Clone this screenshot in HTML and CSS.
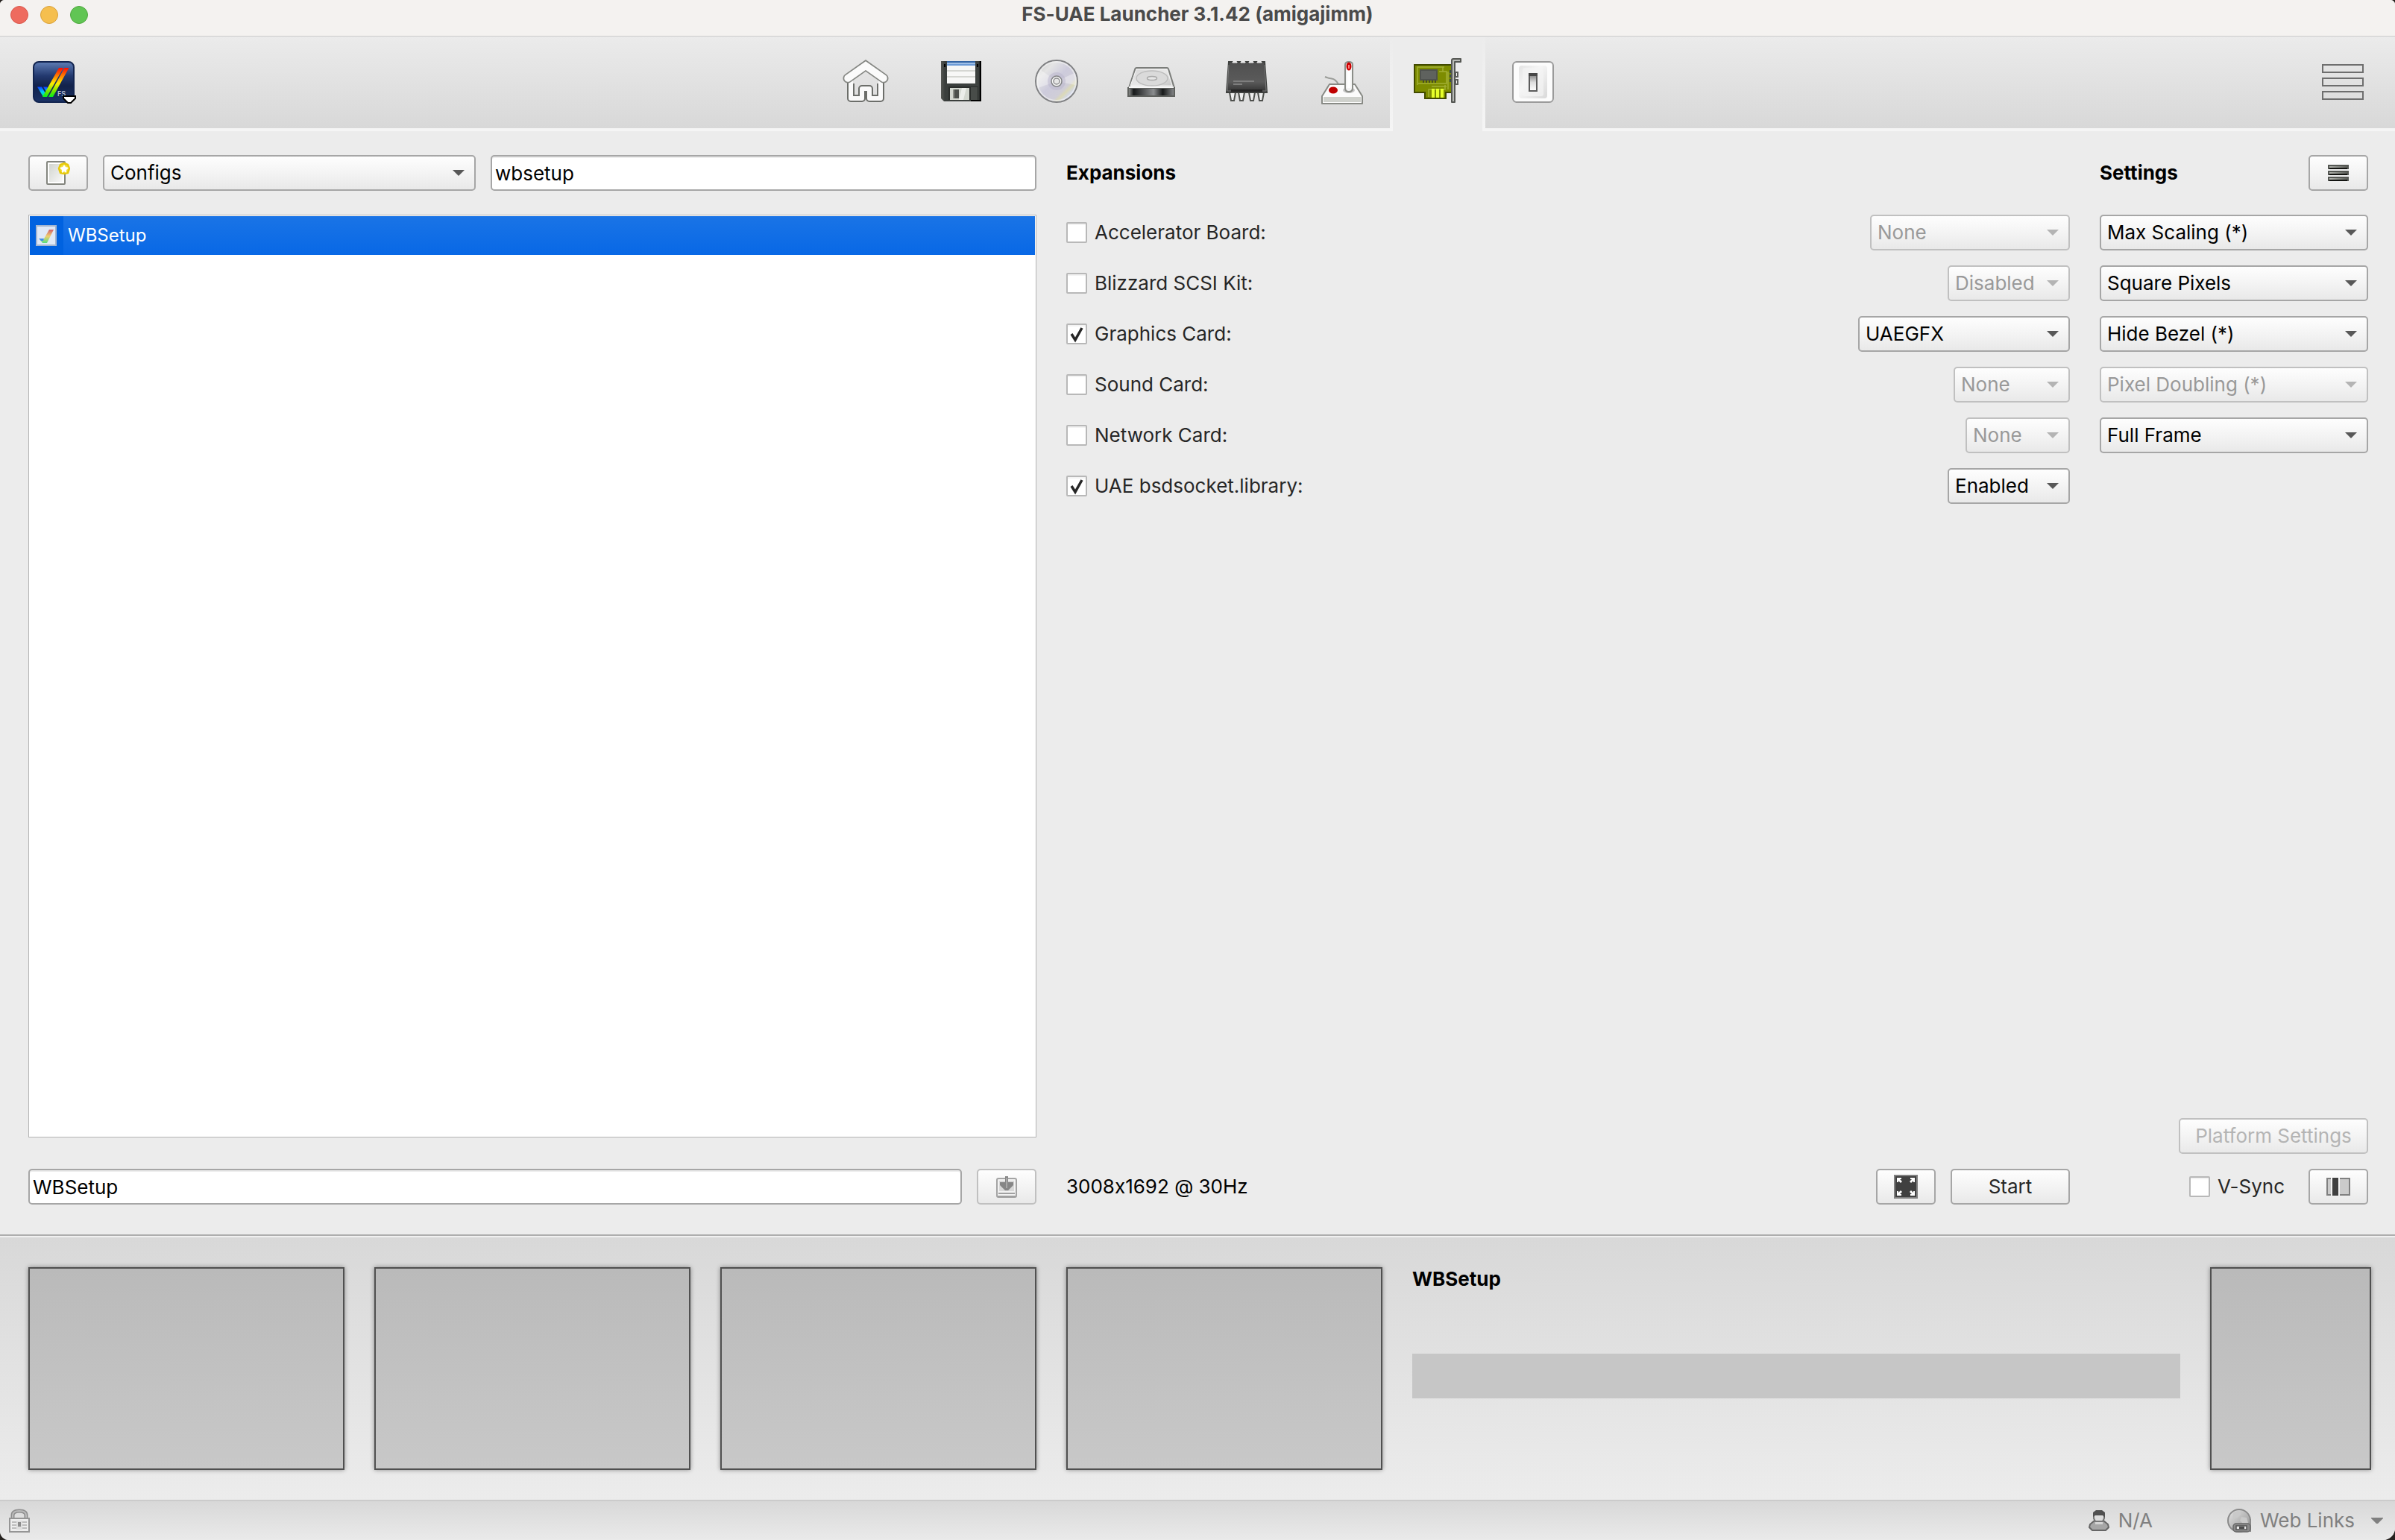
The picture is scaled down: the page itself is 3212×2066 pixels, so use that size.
FILE: index.html
```html
<!DOCTYPE html>
<html lang="en">
<head>
<meta charset="utf-8">
<meta name="viewport" content="width=device-width, initial-scale=1">
<title>FS-UAE Launcher 3.1.42 (amigajimm)</title>
<link rel="stylesheet" href="styles.css">
</head>
<body>
<div class="window">
  <header class="titlebar">
    <div class="lights">
      <button class="light light-close" type="button" aria-label="Close"></button>
      <button class="light light-minimize" type="button" aria-label="Minimize"></button>
      <button class="light light-zoom" type="button" aria-label="Zoom"></button>
    </div>
    <h1 class="window-title">FS-UAE Launcher 3.1.42 (amigajimm)</h1>
  </header>

  <div class="toolbar">
    <button class="tool tool-logo" type="button" aria-label="Main menu">
      <svg width="60" height="64" viewBox="0 0 60 64">
        <defs>
          <linearGradient id="logo-bg" x1="0" y1="0" x2="0" y2="1"><stop offset="0" stop-color="#5f7db5"/><stop offset=".35" stop-color="#22386e"/><stop offset=".6" stop-color="#12224a"/><stop offset="1" stop-color="#1a3266"/></linearGradient>
          <linearGradient id="rainbow" gradientUnits="userSpaceOnUse" x1="0" y1="12" x2="0" y2="52"><stop offset="0" stop-color="#f00"/><stop offset=".25" stop-color="#ff6a00"/><stop offset=".55" stop-color="#ffee00"/><stop offset=".85" stop-color="#5be600"/><stop offset="1" stop-color="#00f020"/></linearGradient>
          <linearGradient id="tick-blue" gradientUnits="userSpaceOnUse" x1="0" y1="38" x2="0" y2="52"><stop offset="0" stop-color="#1030ff"/><stop offset=".5" stop-color="#00c8ff"/><stop offset="1" stop-color="#00ff60"/></linearGradient>
        </defs>
        <rect x="1" y="5" width="54" height="54" rx="7" fill="url(#logo-bg)" stroke="#132550" stroke-width="2"/>
        <path d="M6 38.500h6l5 9-3 4.500z" fill="url(#tick-blue)"/>
        <path d="M14 38.500h5l3 4-3 4z" fill="url(#tick-blue)"/>
        <path d="M35 13h6L19 52h-6zM42.500 13h6L27 52h-6z" fill="url(#rainbow)"/>
        <text x="33" y="51" class="logo-text">FS</text>
        <path d="M41 51h16v3l-6 6h-4l-6-6z" fill="#fff" stroke="#000" stroke-width="2"/>
      </svg>
    </button>

    <nav class="tabs" aria-label="Sections">
      <button class="tab" type="button" aria-label="Home">
        <svg width="64" height="64" viewBox="0 0 64 64" fill="none">
          <path d="M13 30V54H28V41H38V54H53V30" stroke="#6c6e6a" stroke-width="10" stroke-linejoin="round"/>
          <path d="M13 29V54H28V41H38V54H53V29" stroke="#fafafa" stroke-width="6" stroke-linejoin="round"/>
          <path d="M16 26h34v8l-4 0-13-9-13 9h-4z" fill="#e2e2e2"/>
          <path d="M9 27L33 10L57 27" stroke="#858783" stroke-width="13" stroke-linecap="round"/>
          <path d="M9 27L33 10L57 27" stroke="#fbfbfb" stroke-width="9.500" stroke-linecap="round"/>
        </svg>
      </button>
      <button class="tab" type="button" aria-label="Floppy drives">
        <svg width="64" height="64" viewBox="0 0 64 64">
          <defs><linearGradient id="floppy" x1="0" y1="0" x2="1" y2="0"><stop offset="0" stop-color="#555753"/><stop offset=".1" stop-color="#3a3e3c"/><stop offset=".93" stop-color="#3d413f"/><stop offset="1" stop-color="#0c0c0c"/></linearGradient></defs>
          <path d="M6 4h54v54H10l-4-4z" fill="url(#floppy)"/>
          <path d="M46 56h14v2H46zM58 4h2v54h-2z" fill="#000"/>
          <path d="M10 8h2v4h-2zM54 8h2v4h-2z" fill="#000"/>
          <path d="M14 4h38v30H14z" fill="#f7f7f6"/>
          <path d="M14 4h38v2H14z" fill="#3465a4"/><path d="M14 6h38v2H14z" fill="#9fbfe6"/><path d="M14 8h38v2H14z" fill="#6d9bd6"/>
          <path d="M14 16h38v2H14zM14 24h38v2H14z" fill="#d5d6d2"/>
          <path d="M16 38h40v18H16z" fill="#2a2d2b"/><path d="M46 39h9v17h-9z" fill="#484c49"/>
          <path d="M18 40h26v16H18z" fill="#d3d7cf"/><path d="M34 40h6l-4 16h-6z" fill="#eceeea"/>
          <path d="M22 42h8v12h-8z" fill="#8a8d86"/><path d="M24 42h6v12h-6z" fill="#4c504b"/>
        </svg>
      </button>
      <button class="tab" type="button" aria-label="CD-ROM drives">
        <svg width="64" height="64" viewBox="0 0 64 64">
          <defs><linearGradient id="disc" x1="0" y1="0" x2="1" y2="1"><stop offset="0" stop-color="#c4c4c4"/><stop offset=".25" stop-color="#e4e4e4"/><stop offset=".48" stop-color="#cdcbdc"/><stop offset=".68" stop-color="#d0ced8"/><stop offset=".74" stop-color="#dbd9b8"/><stop offset=".82" stop-color="#d2d8ee"/><stop offset="1" stop-color="#c0c0c0"/></linearGradient></defs>
          <circle cx="33" cy="31" r="28" fill="url(#disc)" stroke="#808183" stroke-width="2"/>
          <circle cx="33" cy="31" r="26" fill="none" stroke="#f4f4f4" stroke-opacity=".6" stroke-width="2"/>
          <path d="M33 31L12 16A26 26 0 0 0 8 40z" fill="#fff" fill-opacity=".35"/>
          <path d="M33 31L57 20A26 26 0 0 1 58 36z" fill="#fff" fill-opacity=".35"/>
          <circle cx="33" cy="31" r="12" fill="#b9b6cc" fill-opacity=".5"/>
          <circle cx="33" cy="31" r="5.500" fill="#e6e6e6" stroke="#f7f7f7" stroke-width="3"/>
          <circle cx="33" cy="31" r="7" fill="none" stroke="#828385" stroke-width="1.500"/>
          <circle cx="33" cy="31" r="4" fill="none" stroke="#8c8c8e" stroke-width="1.500"/>
        </svg>
      </button>
      <button class="tab" type="button" aria-label="Hard drives">
        <svg width="64" height="64" viewBox="0 0 64 64">
          <defs>
            <linearGradient id="hdd-top" x1="0" y1="0" x2="1" y2="1"><stop offset="0" stop-color="#d4d4d4"/><stop offset=".5" stop-color="#e8e8e8"/><stop offset="1" stop-color="#c0c0c0"/></linearGradient>
            <linearGradient id="hdd-front" x1="0" y1="0" x2="1" y2="0"><stop offset="0" stop-color="#9a9c99"/><stop offset=".12" stop-color="#17191a"/><stop offset=".55" stop-color="#8b8d8f"/><stop offset=".75" stop-color="#17191a"/><stop offset="1" stop-color="#8a8c8e"/></linearGradient>
          </defs>
          <path d="M12 13h41q1.500 0 2 1.500L63 40H2L10.500 14q.500-1 1.500-1z" fill="url(#hdd-top)" stroke="#7b7d7a" stroke-width="2"/>
          <path d="M12 15h41l7 22H4z" fill="none" stroke="#f4f4f4" stroke-width="1"/>
          <ellipse cx="33" cy="27" rx="21" ry="10" fill="#dadada" stroke="#bdbdbd" stroke-width="1.500"/>
          <ellipse cx="33" cy="27" rx="6.500" ry="2.500" fill="#e6e6e6" stroke="#a8a8a8" stroke-width="1.500"/>
          <path d="M1 40h62v11H1z" fill="url(#hdd-front)" stroke="#5f615e" stroke-width="2"/>
          <path d="M2 38h60v2H2z" fill="#f6f6f6"/>
        </svg>
      </button>
      <button class="tab" type="button" aria-label="Hardware">
        <svg width="64" height="64" viewBox="0 0 64 64">
          <defs><linearGradient id="chip" x1="0" y1="0" x2="0" y2="1"><stop offset="0" stop-color="#4f4f4f"/><stop offset=".65" stop-color="#5b5b5b"/><stop offset="1" stop-color="#303030"/></linearGradient></defs>
          <path d="M9 46h8l-2 11h-4zM21 46h8l-2 11h-4zM35 46h8l-2 11h-4zM47 46h8l-2 11h-4z" fill="#eee" stroke="#4e504d" stroke-width="2"/>
          <path d="M8 5h48l3 41H5z" fill="url(#chip)" stroke="#3f413f" stroke-width="2"/>
          <path d="M8 9L6 44h52L56 9" fill="none" stroke="#7a7a7a" stroke-width="1"/>
          <path d="M11 42h42v3H11z" fill="#252525"/>
          <path d="M13 5q3-2 6 0v1h-6zM24 5q3-2 6 0v1h-6zM35 5q3-2 6 0v1h-6zM46 5q3-2 6 0v1h-6z" fill="#eee" stroke="#eee" stroke-width="1"/>
          <path d="M14 30h28v2H14zM14 34h12v2H14z" fill="#7e7e7e"/>
        </svg>
      </button>
      <button class="tab" type="button" aria-label="Input devices">
        <svg width="64" height="64" viewBox="0 0 64 64">
          <path d="M9 25Q13 27 18 27.500T27 35" fill="none" stroke="#9a9c98" stroke-width="2"/>
          <path d="M15 35h34l10 16v10H5V51z" fill="#fbfbfb" stroke="#888a85" stroke-width="2" stroke-linejoin="round"/>
          <path d="M7 52h50v7H7z" fill="#cfd1cc"/>
          <ellipse cx="41" cy="43" rx="8" ry="4" fill="#c6c6c6"/>
          <path d="M36 9q0-4 5-4t5 4v31q0 5-5 5t-5-5z" fill="#f5f5f5" stroke="#8b8d88" stroke-width="2"/>
          <path d="M39 14h4v26h-4z" fill="#fff"/>
          <ellipse cx="41" cy="11" rx="3.500" ry="5.500" fill="#c00"/><path d="M40 9h2v5h-2z" fill="#ff7a7a"/>
          <ellipse cx="20" cy="43" rx="6" ry="4.500" fill="#c00000"/>
        </svg>
      </button>
      <button class="tab tab-active" type="button" aria-label="Expansions" aria-current="page">
        <svg width="64" height="64" viewBox="0 0 64 64">
          <path d="M1 9h50v37h-8v8H15v-8H1z" fill="#7d8c00" stroke="#414a00" stroke-width="2"/>
          <path d="M5 36V12h36M39 12v6M34 18h10v16H6M46 18v24M20 52V42h22v-6M24 38h20" fill="none" stroke="#a3b035" stroke-width="1.500"/>
          <path d="M8 15h24v15H8z" fill="#4f524e"/><path d="M10 17h20v11H10z" fill="#5f625e"/>
          <path d="M12 30h2v3h-2zM16 30h2v3h-2zM20 30h2v3h-2zM24 30h2v3h-2zM28 30h2v3h-2z" fill="#474d20"/>
          <path d="M24 41h4v12h-4zM30 41h4v12h-4zM36 41h4v12h-4z" fill="#e6ff2a"/>
          <path d="M48 16h2v4h-2zM48 22h2v4h-2zM48 28h2v4h-2z" fill="#3c5040"/>
          <path d="M56 19h3v6h-3zM56 29h3v6h-3z" fill="#fff" stroke="#5a5c58" stroke-width="2"/>
          <path d="M51 59V3q0-2 2-2h10v4h-8v54z" fill="#b9bbb7" stroke="#555753" stroke-width="2" stroke-linejoin="round"/>
        </svg>
      </button>
      <button class="tab" type="button" aria-label="Additional configuration">
        <svg width="64" height="64" viewBox="0 0 64 64">
          <defs>
            <linearGradient id="plate" x1="0" y1="0" x2="1" y2="1"><stop offset="0" stop-color="#e4e4e4"/><stop offset=".4" stop-color="#f6f6f6"/><stop offset="1" stop-color="#d9d9d9"/></linearGradient>
            <linearGradient id="rocker" x1="0" y1="0" x2="0" y2="1"><stop offset="0" stop-color="#777"/><stop offset=".5" stop-color="#ddd"/><stop offset="1" stop-color="#fff"/></linearGradient>
          </defs>
          <rect x="5" y="5" width="54" height="54" rx="5" fill="#fcfcfc" stroke="#9a9a9a" stroke-width="2"/>
          <rect x="13" y="10" width="38" height="44" rx="4" fill="url(#plate)"/>
          <rect x="18" y="13" width="28" height="38" rx="3" fill="#f4f4f4" fill-opacity=".7"/>
          <rect x="27" y="21" width="10" height="23" fill="url(#rocker)" stroke="#5c5c5c" stroke-width="2"/>
          <path d="M26 20h12v4H26z" fill="#474747"/>
        </svg>
      </button>
    </nav>

    <button class="tool tool-menu" type="button" aria-label="Menu">
      <svg width="58" height="64" viewBox="0 0 58 64" fill="none" stroke="#6e6e6e" stroke-width="2"><path d="M1 9h54v10H1zM1 27h54v10H1zM1 45h54v10H1z"/></svg>
    </button>
  </div>

  <main class="main">
    <section class="column column-configs" aria-label="Configurations">
      <div class="row">
        <button class="button button-icon" type="button" aria-label="New config">
          <svg width="32" height="32" viewBox="0 0 32 32">
            <defs><linearGradient id="page" x1="0" y1="0" x2="1" y2="1"><stop offset="0" stop-color="#d2d5cf"/><stop offset="1" stop-color="#f8f8f8"/></linearGradient></defs>
            <rect x="1" y="1" width="24" height="30" rx="1" fill="#fff" stroke="#84867f" stroke-width="2"/>
            <path d="M4 4h18v24H4z" fill="url(#page)"/>
            <path d="M24 3l5 2 2 5-2 6-5 1-5-1-2-6 2-5z" fill="#f3df3c" stroke="#e6c80c" stroke-width="2.500"/>
            <path d="M24 5l2 3 4 1-3 3v4l-3-2-3 2v-4l-3-3 4-1z" fill="#fff"/>
          </svg>
        </button>
        <select class="select select-configs" aria-label="List type"><option>Configs</option></select>
        <input class="field" type="text" value="wbsetup" aria-label="Search">
      </div>
      <ul class="list">
        <li class="list-item">
          <span class="list-icon">
            <svg width="28" height="28" viewBox="0 0 28 28">
              <defs><linearGradient id="soft-rainbow" x1="0" y1="0" x2="0" y2="1"><stop offset="0" stop-color="#d0606a"/><stop offset=".5" stop-color="#efd070"/><stop offset="1" stop-color="#56dd80"/></linearGradient></defs>
              <rect x="1" y="1" width="26" height="26" fill="#e0e9f6" stroke="#a4b6d0" stroke-width="2"/>
              <path d="M18 6h6L15 24H9l-3-4h4z" fill="url(#soft-rainbow)"/>
              <path d="M4 18h7l-1 3H7z" fill="#3f90e8"/>
            </svg>
          </span>
          <span class="list-label">WBSetup</span>
        </li>
      </ul>
      <div class="row">
        <input class="field" type="text" value="WBSetup" aria-label="Config name">
        <button class="button button-icon" type="button" aria-label="Save config" disabled>
          <svg width="32" height="32" viewBox="0 0 32 32">
            <rect x="3" y="5" width="26" height="25" rx="2" fill="#f2f2f2" stroke="#a4a4a4" stroke-width="2"/>
            <path d="M6 8h20v14H6z" fill="#d8d8d8"/><path d="M5 24h22v2H5zM4 28h24v2H4z" fill="#a0a0a0"/>
            <path d="M14 2h4v8h7v4l-7 7h-4l-7-7v-4h7z" fill="#868686"/>
            <path d="M15 4h2v14h-2z" fill="#a8a8a8"/>
          </svg>
        </button>
      </div>
    </section>

    <section class="column" aria-label="Expansions">
      <h2 class="heading">Expansions</h2>
      <div class="rows">
        <div class="row option">
          <label class="check"><input type="checkbox" class="box">Accelerator Board:</label>
          <select class="select w-268" aria-label="Accelerator board model" disabled><option>None</option></select>
        </div>
        <div class="row option">
          <label class="check"><input type="checkbox" class="box">Blizzard SCSI Kit:</label>
          <select class="select w-164" aria-label="Blizzard SCSI kit state" disabled><option>Disabled</option></select>
        </div>
        <div class="row option">
          <label class="check"><input type="checkbox" class="box" checked>Graphics Card:</label>
          <select class="select w-284" aria-label="Graphics card model"><option>UAEGFX</option></select>
        </div>
        <div class="row option">
          <label class="check"><input type="checkbox" class="box">Sound Card:</label>
          <select class="select w-156" aria-label="Sound card model" disabled><option>None</option></select>
        </div>
        <div class="row option">
          <label class="check"><input type="checkbox" class="box">Network Card:</label>
          <select class="select w-140" aria-label="Network card model" disabled><option>None</option></select>
        </div>
        <div class="row option">
          <label class="check"><input type="checkbox" class="box" checked>UAE bsdsocket.library:</label>
          <select class="select w-164" aria-label="bsdsocket.library state"><option>Enabled</option></select>
        </div>
      </div>
      <div class="row column-end">
        <span class="mode">3008x1692 @ 30Hz</span>
        <button class="button button-icon" type="button" aria-label="Fullscreen">
          <svg width="32" height="32" viewBox="0 0 32 32">
            <path d="M1 1h30v30H1z" fill="#404040" stroke="#808080" stroke-width="2"/>
            <path d="M4 4h6v2H8l3 3-2 2-3-3v2H4zM28 4h-6v2h2l-3 3 2 2 3-3v2h2zM4 28h6v-2H8l3-3-2-2-3 3v-2H4zM28 28h-6v-2h2l-3-3 2-2 3 3v-2h2z" fill="#fff"/>
          </svg>
        </button>
        <button class="button button-start" type="button">Start</button>
      </div>
    </section>

    <section class="column" aria-label="Settings">
      <div class="row option">
        <h2 class="heading">Settings</h2>
        <button class="button button-icon" type="button" aria-label="Settings menu">
          <svg width="28" height="22" viewBox="0 0 28 22">
            <defs><linearGradient id="bar" x1="0" y1="0" x2="1" y2="0"><stop offset="0" stop-color="#b4b6b0"/><stop offset="1" stop-color="#5c5e59"/></linearGradient></defs>
            <path d="M0 0h28v6H0zM0 8h28v6H0zM0 16h28v6H0z" fill="#555753"/>
            <path d="M2 2h24v2H2zM2 10h24v2H2zM2 18h24v2H2z" fill="url(#bar)"/>
            <path d="M2 4h24v2H2zM2 12h24v2H2zM2 20h24v2H2z" fill="#131411"/>
          </svg>
        </button>
      </div>
      <div class="rows">
        <select class="select" aria-label="Scaling"><option>Max Scaling (*)</option></select>
        <select class="select" aria-label="Pixel aspect"><option>Square Pixels</option></select>
        <select class="select" aria-label="Bezel"><option>Hide Bezel (*)</option></select>
        <select class="select" aria-label="Pixel doubling" disabled><option>Pixel Doubling (*)</option></select>
        <select class="select" aria-label="Frame"><option>Full Frame</option></select>
      </div>
      <div class="column-end end-rows">
        <button class="button button-platform" type="button" disabled>Platform Settings</button>
        <div class="row sync-row">
          <label class="check"><input type="checkbox" class="box">V-Sync</label>
          <button class="button button-icon" type="button" aria-label="Sync settings">
            <svg width="32" height="24" viewBox="0 0 32 24">
              <path d="M6 1H1v22h5M18 1h13v22H18" fill="#cbcbcb" stroke="#808080" stroke-width="2"/>
              <path d="M8 0h8v24H8z" fill="#404040"/>
            </svg>
          </button>
        </div>
      </div>
    </section>
  </main>

  <section class="game" aria-label="Selected configuration">
    <div class="shot"></div>
    <div class="shot"></div>
    <div class="shot"></div>
    <div class="shot"></div>
    <div class="info">
      <h2 class="game-title">WBSetup</h2>
      <div class="info-bar"></div>
    </div>
    <div class="shot cover"></div>
  </section>

  <footer class="status">
    <svg class="status-lock" width="28" height="32" viewBox="0 0 28 32">
      <path d="M5 13V9q0-6 9-6t9 6v4" fill="none" stroke="#8d8d8d" stroke-width="5"/>
      <path d="M5 12V9q0-6 9-6t9 6v3" fill="none" stroke="#bcbcbc" stroke-width="2"/>
      <path d="M1 13h26v18H1z" fill="#ededed" stroke="#959595" stroke-width="2"/>
      <path d="M4 17h20v2H4zM4 21h20v2H4zM4 25h20v2H4z" fill="#bdbdbd"/><path d="M10 16h8v12h-8z" fill="#dedede"/><path d="M12 18h4v6h-4z" fill="#8c8c8c"/>
    </svg>
    <div class="status-user">
      <svg width="28" height="28" viewBox="0 0 28 28">
        <path d="M8 14h12l6 5 1 4-4 4H5l-4-4 1-4z" fill="#a6a6a6" stroke="#666" stroke-width="2"/>
        <path d="M9 16h10v3H9z" fill="#d4d4d4"/>
        <path d="M7 4h14v7l-2 4H9l-2-4z" fill="#dcdcdc" stroke="#777" stroke-width="2"/>
        <path d="M6 3l4-3h8l4 3v7l-3-3H9l-3 2z" fill="#505050"/>
      </svg>
      <span>N/A</span>
    </div>
    <button class="status-links" type="button">
      <svg width="32" height="32" viewBox="0 0 32 32">
        <defs><linearGradient id="globe" x1="0" y1="0" x2="1" y2="1"><stop offset="0" stop-color="#e6e6e6"/><stop offset="1" stop-color="#8e8e8e"/></linearGradient></defs>
        <circle cx="16" cy="16" r="15" fill="url(#globe)" stroke="#8a8a8a" stroke-width="2"/>
        <path d="M8 5l7-2 4 4-5 5-7 1zM19 11l7 1 2 7-6 2-5-5z" fill="#c9c9c9"/>
        <path d="M31 14v17" stroke="#8a8a8a" stroke-width="2"/>
        <rect x="8" y="20" width="23" height="11" rx="4" fill="#8b8b8b" stroke="#686868" stroke-width="1.500"/>
        <path d="M12 23h14v5H12z" fill="#e8e8e8" stroke="#555" stroke-width="1.500"/><path d="M16 24h7v3h-7z" fill="#4c4c4c"/>
      </svg>
      <span>Web Links</span>
      <svg class="caret" width="16" height="8" viewBox="0 0 16 8"><path d="M0 0h16v1L9 8H7L0 1z" fill="#808080"/></svg>
    </button>
  </footer>
</div>
</body>
</html>
```
FILE: styles.css
```css
* {
  box-sizing: border-box;
}

body {
  margin: 0;
  background: #26221f;
  color: #000;
  font-family: Inter, "Liberation Sans", sans-serif;
  font-size: 26px;
  line-height: 32px;
  font-feature-settings: "calt" 0;
}

button,
input,
select {
  margin: 0;
  font: inherit;
  font-feature-settings: inherit;
  color: inherit;
}

svg {
  display: block;
  flex: none;
}

h1,
h2 {
  margin: 0;
  font-size: 26px;
  line-height: 32px;
  font-weight: 700;
}

.window {
  display: flex;
  flex-direction: column;
  min-height: 100vh;
  background: #ececec;
  border-radius: 6px 6px 16px 12px;
  overflow: hidden;
}

/* Title bar */
.titlebar {
  display: grid;
  grid-template-columns: 1fr auto 1fr;
  align-items: start;
  height: 49px;
  padding: 0 14px;
  background: #f4f2f0;
  border-bottom: 1px solid #cbcbcb;
}

.lights {
  display: flex;
  gap: 16px;
  padding-top: 8px;
}

.light {
  width: 24px;
  height: 24px;
  padding: 0;
  border: 1px solid #d9574b;
  border-radius: 50%;
  background: #ee6b5f;
}

.light-minimize {
  background: #f5bf4f;
  border-color: #d9a13b;
}

.light-zoom {
  background: #61c554;
  border-color: #4fa73f;
}

.window-title {
  padding-top: 3px;
  color: #4a4a4a;
}

/* Toolbar */
.toolbar {
  display: grid;
  grid-template-columns: 1fr auto 1fr;
  height: 127px;
  padding: 0 40px 0 44px;
  background: linear-gradient(#ebebeb, #d8d8d8) 0 0 / 100% 123px no-repeat #f5f5f5;
}

.tool,
.tab {
  padding: 29px 0 0;
  border: 0;
  background: none;
  display: flex;
  align-items: flex-start;
}

.tool-logo {
  justify-self: start;
}

.tool-menu {
  justify-self: end;
}

.tabs {
  display: flex;
}

.tab {
  width: 128px;
  justify-content: center;
}

.tab-active {
  background: #ececec;
  border: solid #f3f3f3;
  border-width: 0 4px;
  border-image: linear-gradient(#ececec, #f5f5f5) 0 4;
}

.logo-text {
  font-size: 9px;
  font-weight: 600;
  fill: #b9c0d2;
}

/* Main area */
.main {
  flex: 1;
  display: grid;
  grid-template-columns: minmax(0, 676fr) minmax(0, 673fr) 360px;
  column-gap: 40px;
  padding: 32px 36px 40px 38px;
}

.column {
  display: flex;
  flex-direction: column;
  gap: 32px;
}

.column-configs {
  gap: 0;
}

.column-end {
  margin-top: auto;
}

.row {
  display: flex;
  align-items: center;
  gap: 20px;
}

.option {
  justify-content: space-between;
}

.rows,
.end-rows {
  display: flex;
  flex-direction: column;
  gap: 20px;
}

.end-rows {
  align-items: flex-end;
}

.heading {
  padding: 8px 0;
}

.mode {
  flex: 1;
}

.sync-row {
  gap: 32px;
}

/* Controls */
.button,
.select,
.field {
  height: 48px;
  border: 2px solid #a6a6a6;
  border-radius: 5px;
}

.button {
  display: flex;
  align-items: center;
  justify-content: center;
  padding: 0;
  color: #262626;
  background: linear-gradient(#fefefe, #e9e9e9);
}

.button:disabled {
  border-color: #c0c0c0;
  color: #b4b4b4;
}

.button-icon {
  flex: none;
  width: 80px;
}

.button-start {
  width: 160px;
}

.button-platform {
  width: 254px;
}

.select {
  appearance: none;
  padding: 0 36px 0 8px;
  background:
    url("data:image/svg+xml,%3Csvg xmlns='http://www.w3.org/2000/svg' width='16' height='8'%3E%3Cpath d='M0 0h16L8 8z' fill='%23585858'/%3E%3C/svg%3E") right 13px top 18px no-repeat,
    linear-gradient(#fefefe, #e9e9e9);
}

.select:disabled {
  opacity: 1;
  border-color: #c0c0c0;
  color: #999;
  background:
    url("data:image/svg+xml,%3Csvg xmlns='http://www.w3.org/2000/svg' width='16' height='8'%3E%3Cpath d='M0 0h16L8 8z' fill='%23b4b4b4'/%3E%3C/svg%3E") right 13px top 18px no-repeat,
    linear-gradient(#fefefe, #e9e9e9);
}

.select-configs {
  width: 500px;
}

.w-140 { width: 140px; }
.w-156 { width: 156px; }
.w-164 { width: 164px; }
.w-268 { width: 268px; }
.w-284 { width: 284px; }

.field {
  flex: 1;
  min-width: 0;
  padding: 0 4px;
  background: #fff;
  box-shadow: inset 0 2px 0 #ededed;
}

.check {
  display: flex;
  align-items: center;
  gap: 10px;
  color: #262626;
}

.box {
  appearance: none;
  width: 28px;
  height: 28px;
  border: 2px solid #b8b8b8;
  border-radius: 2px;
  background: #fff;
  box-shadow: inset 0 2px 0 #f3f3f3;
}

.box:checked {
  background: #fff url("data:image/svg+xml,%3Csvg xmlns='http://www.w3.org/2000/svg' width='24' height='24'%3E%3Cpath d='M5 12l5 8L19 4' fill='none' stroke='%23262626' stroke-width='3.500'/%3E%3C/svg%3E") center no-repeat;
}

/* Config list */
.list {
  flex: 1;
  margin: 32px 0 42px;
  padding: 1px;
  border: 1px solid #b4b4b4;
  background: #fff;
  list-style: none;
}

.list-item {
  display: flex;
  height: 52px;
  color: #fff;
  background: #0062e0;
}

.list-icon {
  width: 45px;
  padding: 12px 8px;
}

.list-label {
  flex: 1;
  padding: 10px 6px;
  font-size: 24px;
  background: linear-gradient(#1a74e6, #0868e6);
}

/* Selected game */
.game {
  display: flex;
  gap: 40px;
  padding: 42px 32px 40px 38px;
  border-top: 2px solid #aeaeae;
  box-shadow: inset 0 2px 0 #f0f0f0;
  background: linear-gradient(#d8d8d8, #ececec);
}

.shot {
  width: 424px;
  height: 272px;
  border: 2px solid #505050;
  background: linear-gradient(#bababa, #c8c8c8);
  box-shadow: 0 0 6px rgba(0, 0, 0, .4);
}

.cover {
  width: 216px;
}

.info {
  flex: 1;
}

.info-bar {
  height: 60px;
  margin-top: 84px;
  background: #c6c6c6;
}

/* Status bar */
.status {
  display: flex;
  align-items: center;
  height: 54px;
  padding: 0 16px 0 12px;
  border-top: 2px solid #cbcbcb;
  background: linear-gradient(#d8d8d8, #eaeaea);
  color: #808080;
}

.status-user,
.status-links {
  display: flex;
  align-items: center;
  gap: 12px;
}

.status-user {
  margin: 0 100px 0 auto;
}

.status-links {
  padding: 0;
  border: 0;
  background: none;
}

.caret {
  margin-left: 10px;
}
```
